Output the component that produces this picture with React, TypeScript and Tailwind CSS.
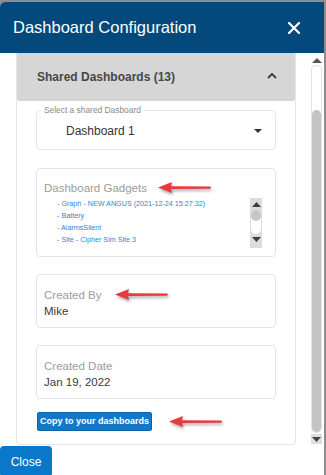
import React from "react";

const gadgets = [
  "- Graph - NEW ANGUS (2021-12-24 15:27:32)",
  "- Battery",
  "- AlarmsSilent",
  "- Site - Cipher Sim Site 3",
];

function RedArrow({ className }: { className: string }) {
  return (
    <svg
      className={className}
      width="56"
      height="14"
      viewBox="0 0 56 14"
      style={{ filter: "drop-shadow(1px 2px 1.5px rgba(0,0,0,0.35))" }}
    >
      <path d="M1 6.5 L15 1 L14 5.2 L53 5.4 Q55 6.5 53 7.8 L14 8 L15 12 Z" fill="#e8393f" />
    </svg>
  );
}

function InfoBox({ label, value }: { label: string; value: string }) {
  return (
    <div className="h-[54px] rounded-[4px] border border-[#dfe6ee] pl-[7px] pt-[13px]">
      <div className="text-[11.5px] leading-[14px] text-[#9c9c9c]">{label}</div>
      <div className="mt-[2px] text-[11.5px] leading-[14px] text-[#3a3a3a]">{value}</div>
    </div>
  );
}

export default function App() {
  return (
    <div className="h-[475px] w-[326px] overflow-hidden bg-[#8d8d8d] pr-[2px] pt-[2px] font-['Liberation_Sans',Arial,sans-serif]">
      <div className="flex h-[473px] w-[324px] flex-col overflow-hidden rounded-tl-[5px] bg-white">
        <header className="flex h-[51px] shrink-0 items-center justify-between bg-[#03497c] pl-[13px] pr-[24px]">
          <h1 className="text-[16.5px] leading-none text-white">Dashboard Configuration</h1>
          <svg width="12" height="12" viewBox="0 0 12 12">
            <path d="M1 1 L11 11 M11 1 L1 11" stroke="#fff" strokeWidth="2.2" strokeLinecap="square" />
          </svg>
        </header>

        <div className="flex min-h-0 flex-1 pl-[16px]">
          <section className="flex w-[280px] flex-col rounded-b-[4px] border-x border-b border-[#e6e6e6]">
            <div className="flex h-[48px] shrink-0 items-center justify-between rounded-b-[3px] bg-[#d6d6d6] pl-[20px] pr-[18px]">
              <h2 className="text-[12px] font-bold text-[#474747]">Shared Dashboards (13)</h2>
              <svg width="10" height="7" viewBox="0 0 10 7" className="mb-[3px]">
                <path d="M1 6 L5 2 L9 6" fill="none" stroke="#3c3c3c" strokeWidth="1.8" />
              </svg>
            </div>

            <div className="flex flex-col px-[19px] pt-[5px]">
              <fieldset className="h-[44px] rounded-[4px] border border-[#dfe6ee] px-[4px]">
                <legend className="px-[3px] text-[8.4px] leading-[8px] text-[#8a8a8a]">Select a shared Dasboard</legend>
                <div className="flex h-[34px] items-center justify-between pl-[25px] pr-[9px]">
                  <span className="text-[12px] text-[#333]">Dashboard 1</span>
                  <svg width="8" height="4" viewBox="0 0 8 4">
                    <path d="M0 0 L8 0 L4 4 Z" fill="#333" />
                  </svg>
                </div>
              </fieldset>

              <div className="relative mt-[18px] h-[89px] rounded-[4px] border border-[#dfe6ee] pl-[7px] pt-[12px]">
                <div className="text-[11.5px] leading-[14px] text-[#9c9c9c]">Dashboard Gadgets</div>
                <RedArrow className="absolute left-[120px] top-[12px]" />
                <div className="mt-[3px] flex">
                  <ul className="w-[206px] pl-[13px]">
                    {gadgets.map((g) => (
                      <li key={g} className="whitespace-nowrap text-[7.2px] leading-[12px] text-[#2e86d6]">
                        {g}
                      </li>
                    ))}
                  </ul>
                  <div className="flex h-[50px] w-[12px] flex-col items-center bg-[#dcdcdc] pt-[4px]">
                    <svg width="9" height="5" viewBox="0 0 9 5">
                      <path d="M0 5 L4.5 0 L9 5 Z" fill="#3f3f3f" />
                    </svg>
                    <div className="mt-[3px] h-[24px] w-[10px] rounded-[5px] bg-white">
                      <div className="h-[11px] w-[10px] rounded-full bg-[#c6c6c6]" />
                    </div>
                    <svg width="9" height="5" viewBox="0 0 9 5" className="mt-[3px]">
                      <path d="M0 0 L9 0 L4.5 5 Z" fill="#3f3f3f" />
                    </svg>
                  </div>
                </div>
              </div>

              <div className="relative mt-[17px]">
                <InfoBox label="Created By" value="Mike" />
                <RedArrow className="absolute left-[78px] top-[14px]" />
              </div>

              <div className="mt-[17px]">
                <InfoBox label="Created Date" value="Jan 19, 2022" />
              </div>

              <div className="relative mt-[13px] flex items-center">
                <button className="ml-[1px] h-[19px] w-[115px] rounded-[2px] border border-[#0f63a8] bg-[#1478c8] text-[9px] font-bold text-white">
                  Copy to your dashboards
                </button>
                <RedArrow className="ml-[16px]" />
              </div>
            </div>
          </section>

          <div className="ml-[15px] mt-[5px] flex w-[11px] flex-col items-center">
            <svg width="10" height="5" viewBox="0 0 10 5">
              <path d="M0 5 L5 0 L10 5 Z" fill="#555" />
            </svg>
            <div className="mt-[2px] flex h-[368px] w-[11px] flex-col rounded-[5px] border border-[#e2e2e2] bg-white">
              <div className="mt-[44px] flex-1 rounded-[5px] bg-[#c4c4c4]" />
            </div>
            <div className="mt-[1px] flex h-[10px] w-[11px] items-center justify-center bg-[#dedede]">
              <svg width="9" height="5" viewBox="0 0 9 5">
                <path d="M0 0 L9 0 L4.5 5 Z" fill="#444" />
              </svg>
            </div>
          </div>
        </div>

        <footer className="h-[30px] shrink-0">
          <button className="mt-[1px] h-[31px] w-[52px] rounded-[4px] bg-[#0a78c8] text-[12px] text-white">
            Close
          </button>
        </footer>
      </div>
    </div>
  );
}
